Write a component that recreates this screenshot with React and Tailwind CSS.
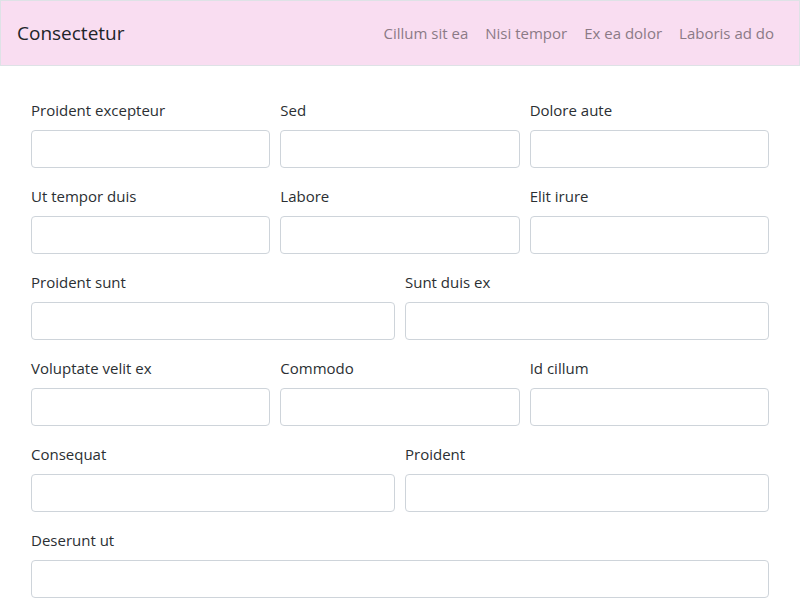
import React from 'react';

const rows = [
  ['Proident excepteur', 'Sed', 'Dolore aute'],
  ['Ut tempor duis', 'Labore', 'Elit irure'],
  ['Proident sunt', 'Sunt duis ex'],
  ['Voluptate velit ex', 'Commodo', 'Id cillum'],
  ['Consequat', 'Proident'],
  ['Deserunt ut'],
];

const cols = {
  1: 'grid-cols-1',
  2: 'grid-cols-2',
  3: 'grid-cols-3',
};

const App = () => {
  return (
    <div className="min-h-screen bg-white text-[#212529]" style={{ fontFamily: '"Segoe UI", "Open Sans", "Noto Sans", sans-serif' }}>
      <nav className="h-[66px] flex items-center justify-between pl-[16px] pr-[25px] bg-[#f9ddf1] border border-[#dee2e6]">
        <span className="text-[19px] leading-[30px] text-[#212529]">Consectetur</span>
        <div className="flex gap-[17px] text-[15px] text-[#8b7a86]">
          <a href="#">Cillum sit ea</a>
          <a href="#">Nisi tempor</a>
          <a href="#">Ex ea dolor</a>
          <a href="#">Laboris ad do</a>
        </div>
      </nav>
      <form className="px-[31px] pt-[32px]">
        {rows.map((row, i) => (
          <div key={i} className={`grid gap-[10px] mb-4 ${cols[row.length]}`}>
            {row.map((label) => (
              <div key={label}>
                <label className="block text-[15px] leading-6 mb-2 text-[#2b2f33]">{label}</label>
                <input type="text" className="block w-full h-[38px] rounded-[4px] border border-[#ced4da] bg-white" />
              </div>
            ))}
          </div>
        ))}
      </form>
    </div>
  );
};

export default App;
